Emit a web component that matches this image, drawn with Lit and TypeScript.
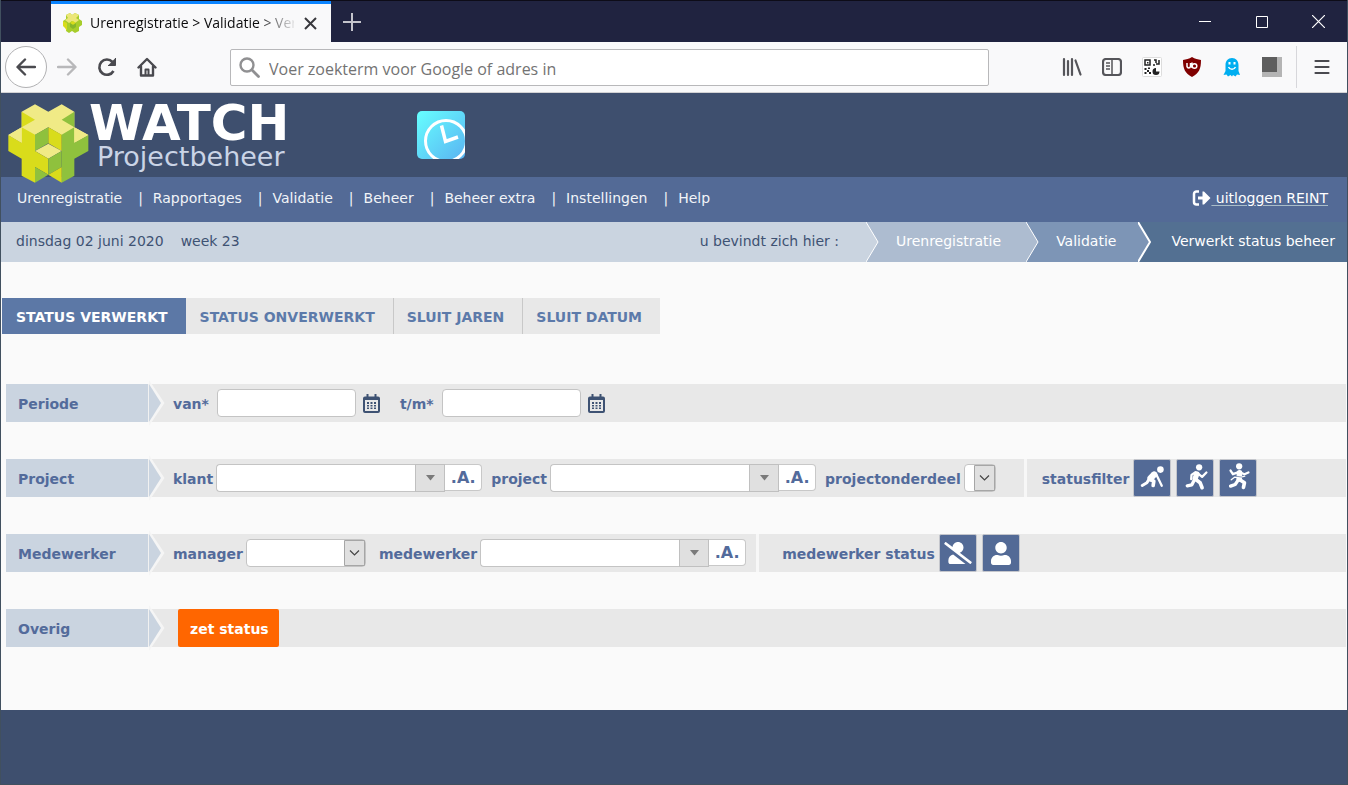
import { LitElement, html, css, svg, nothing, TemplateResult } from "lit";
import { customElement, property } from "lit/decorators.js";

/* ---------- Browser window: title bar and toolbar ---------- */

@customElement("browser-chrome")
export class BrowserChrome extends LitElement {
  static styles = css`
    :host { display: block; font-family: "Open Sans", "Noto Sans", sans-serif; }
    button { border: 0; background: none; padding: 0; margin: 0; display: grid; place-items: center; }
    svg { display: block; fill: none; }
    .titlebar { display: flex; height: 41px; border-top: 1px solid #0d0c18; background: #202340; }
    .tab { display: flex; align-items: center; box-sizing: border-box; width: 280px; height: 41px; margin-left: 50px; padding: 0 14px 0 10px; border-top: 3px solid #0a84ff; background: #f9f9fa; }
    .title { flex: 1; margin: 0 10px 0 7px; overflow: hidden; white-space: nowrap; font-size: 14px; line-height: 20px; color: #0c0c0d; mask-image: linear-gradient(to right, #000 82%, transparent 102%); }
    .add { width: 42px; }
    .controls { display: flex; margin-left: auto; }
    .controls button { width: 57px; }
    .toolbar { display: flex; align-items: center; height: 50px; padding-left: 4px; background: #f9f9fa; border-bottom: 1px solid #d2d2d4; }
    .nav { width: 40px; height: 40px; }
    .back { box-sizing: border-box; width: 42px; height: 42px; border: 1px solid #b1b1b3; border-radius: 50%; background: #fff; }
    .address { flex: 1; display: flex; align-items: center; box-sizing: border-box; height: 37px; margin: 0 63px; padding-left: 8px; border: 1px solid #b8b8ba; border-radius: 2px; background: #fff; }
    .address input { flex: 1; min-width: 0; border: 0; outline: 0; padding: 3px 0 0 9px; background: none; font: 16px "Open Sans", "Noto Sans", sans-serif; }
    .address input::placeholder { color: #737373; opacity: 1; }
    .menu { width: 51px; height: 42px; margin-left: 4px; border-left: 1px solid #d7d7db; }
  `;

  render() {
    return html`
      <div class="titlebar">
        <div class="tab">
          <svg width="22" height="22" viewBox="0 0 22 22">
            <path d="M5 3l4-2 2 2 3-2 4 2v4l3 2v4l-3 2v4l-4 2-3-2-3 2-3-2v-4l-3-2V9l3-2z" fill="#a7cd2b"/>
            <path d="M5 3l4-2 2 2 3-2 4 2-3 3 3 2-4 3-3-2-3 2-4-3 3-2z" fill="#ece678"/>
            <path d="M2 9l4 2v8l-2-3-2-2zM9 11l3-2 3 2-3 2z" fill="#d8dc1c"/>
            <path d="M12 13l3-2v4l-3 2-3-2v-4z" fill="#86b62b"/>
          </svg>
          <span class="title">Urenregistratie &gt; Validatie &gt; Verwerkt status beheer</span>
          <button aria-label="Tabblad sluiten">
            <svg width="13" height="13" viewBox="0 0 13 13" stroke="#38383d" stroke-width="2"><path d="M1 1l11 11M12 1L1 12"/></svg>
          </button>
        </div>
        <button class="add" aria-label="Nieuw tabblad">
          <svg width="18" height="18" viewBox="0 0 18 18" stroke="#c4c4cc" stroke-width="2"><path d="M0 9h18M9 0v18"/></svg>
        </button>
        <div class="controls">
          <button aria-label="Minimaliseren"><svg width="12" height="12" stroke="#fff"><path d="M0 5.500h12"/></svg></button>
          <button aria-label="Maximaliseren"><svg width="12" height="12" stroke="#fff"><path d="M.5.5h11v11H.5z"/></svg></button>
          <button aria-label="Sluiten"><svg width="13" height="13" stroke="#fff" stroke-width="1.200"><path d="M0 0l13 13M13 0L0 13"/></svg></button>
        </div>
      </div>
      <div class="toolbar">
        <button class="back" aria-label="Vorige">
          <svg width="20" height="18" viewBox="0 0 20 18" stroke="#4a4a4f" stroke-width="2.400" stroke-linecap="round" stroke-linejoin="round"><path d="M19 9H2M9 1.500L1.500 9 9 16.500"/></svg>
        </button>
        <button class="nav" aria-label="Volgende">
          <svg width="20" height="18" viewBox="0 0 20 18" stroke="#b8b8ba" stroke-width="2.400" stroke-linecap="round" stroke-linejoin="round"><path d="M1 9h17M11 1.500L18.500 9 11 16.500"/></svg>
        </button>
        <button class="nav" aria-label="Vernieuwen">
          <svg width="20" height="20" viewBox="0 0 20 20" stroke="#4a4a4f" stroke-width="2.600"><path d="M16.500 14A7.600 7.600 0 1 1 15.500 5"/><path d="M18.500 1v7.500H11" fill="#4a4a4f" stroke-width="1"/></svg>
        </button>
        <button class="nav" aria-label="Startpagina">
          <svg width="20" height="20" viewBox="0 0 20 20" stroke="#4a4a4f" stroke-width="2.400" stroke-linejoin="round" stroke-linecap="round"><path d="M1.500 10.500L10 2l8.500 8.500M4 9.500V18.500h12V9.500"/><path d="M8.500 18v-5.500h3V18" stroke-width="2"/></svg>
        </button>
        <div class="address">
          <svg width="21" height="21" viewBox="0 0 21 21" stroke="#909092" stroke-linecap="round"><circle cx="8" cy="8" r="6.500" stroke-width="2.400"/><path d="M13 13l6.500 6.500" stroke-width="2.800"/></svg>
          <input type="text" aria-label="Adresbalk" placeholder="Voer zoekterm voor Google of adres in" />
        </div>
        <button class="nav" aria-label="Bibliotheek">
          <svg width="20" height="20" viewBox="0 0 20 20" stroke="#55555a" stroke-width="2.200" stroke-linecap="round"><path d="M2 2v16M6 4v14M10 2v16M13.500 3.500L18.500 17.500"/></svg>
        </button>
        <button class="nav" aria-label="Zijbalk">
          <svg width="20" height="18" viewBox="0 0 20 18" stroke="#55555a" stroke-width="2.200"><rect x="1" y="1" width="18" height="16" rx="3"/><path d="M10 1v16M4 5h4M4 8h4M4 11h4" stroke-width="1.500"/></svg>
        </button>
        <button class="nav" aria-label="QR-code">
          <svg width="20" height="20" viewBox="0 0 20 20"><rect x=".5" y=".5" width="19" height="19" rx="1" fill="#fff" stroke="#ddd"/><path d="M3 3h5v5H3zM12 3h2v3M17 3v4h-3M11 8h2" stroke="#222" stroke-width="1.500"/><path d="M5 5h1.500v1.500H5zM2.500 11h2v2h-2zM6 10.500h2v1.500H6zM5 13h2v2H5zM2.500 15h2v2h-2zM7 15h2v2H7z" fill="#222"/><path d="M14 11a3.500 3.500 0 1 0 3.500 3.500H14z" fill="#222"/></svg>
        </button>
        <button class="nav" aria-label="uBlock Origin">
          <svg width="20" height="20" viewBox="0 0 20 20"><path d="M10 0c3 2 6 2 9 3 0 9-2 13-9 17C3 16 1 12 1 3c3-1 6-1 9-3z" fill="#800000"/><path d="M5 6v3.500a1.800 1.800 0 0 0 3.500 0V6M10 5.500v5.500" stroke="#fff" stroke-width="1.500"/><circle cx="12.500" cy="9" r="2.300" stroke="#fff" stroke-width="1.500"/></svg>
        </button>
        <button class="nav" aria-label="Ghostery">
          <svg width="18" height="20" viewBox="0 0 18 20"><path d="M9 1c4 0 6.500 3 6.500 7v6l1.500 4-3-.5-1.500 2-2.500-1.500L9 19.500 7.500 18 5 19.500l-1.500-2-3 .5L2.500 14V8C2.500 4 5 1 9 1z" fill="#00aef0"/><path d="M6.500 5v2.500M11.500 5v2.500" stroke="#fff" stroke-width="2"/><path d="M5.500 10c1.500 3 5.500 3 7 0" stroke="#fff" stroke-width="1.500"/></svg>
        </button>
        <button class="nav" aria-label="Extensie">
          <svg width="20" height="20"><path d="M0 0h20v20H0z" fill="#b4b4b4"/><path d="M0 0h15v15H0z" fill="#5e5e5e"/></svg>
        </button>
        <button class="menu" aria-label="Menu">
          <svg width="16" height="16" viewBox="0 0 16 16" stroke="#4a4a4f" stroke-width="2.200" stroke-linecap="round"><path d="M1.500 2h13M1.500 8h13M1.500 14h13"/></svg>
        </button>
      </div>
    `;
  }
}

/* ---------- Filter row: arrow-shaped heading with fields ---------- */

@customElement("filter-row")
export class FilterRow extends LitElement {
  @property() heading = "";

  static styles = css`
    :host { display: flex; height: 38px; background: #e8e8e8; }
    .heading { box-sizing: border-box; width: 143px; padding-left: 12px; margin: 0; border-right: 1px solid #f1f1f1; background: #cad4e0; color: #536b9b; font-size: 14px; font-weight: 700; line-height: 40px; }
    .arrow { display: block; width: 15px; height: 38px; overflow: visible; }
    .fields { display: flex; flex: 1; align-items: center; padding-left: 9px; }
  `;

  render() {
    return html`
      <h2 class="heading">${this.heading}</h2>
      <svg class="arrow" viewBox="0 0 15 38">
        <path d="M0-4L15.500 19 0 42z" fill="#f5f5f5"/>
        <path d="M0 0L12 19 0 38z" fill="#cad4e0"/>
      </svg>
      <div class="fields"><slot></slot></div>
    `;
  }
}

/* ---------- Application ---------- */

const figure = (shape: TemplateResult) => svg`<g fill="none" stroke="#fff" stroke-linecap="round" stroke-linejoin="round">${shape}</g>`;

@customElement("app-root")
export class AppRoot extends LitElement {
  static styles = css`
    :host { display: flex; flex-direction: column; box-sizing: border-box; min-height: 100vh; border: solid #41505f; border-width: 0 1px 1px; background: #fafafa; font-family: Verdana, "DejaVu Sans", sans-serif; font-size: 14px; }
    a { color: inherit; text-decoration: none; }
    svg { display: block; }

    .header { display: flex; align-items: flex-start; position: relative; z-index: 1; box-sizing: border-box; height: 84px; padding: 11px 0 0 7px; background: #3e4f6e; }
    .brand { display: grid; color: #fff; white-space: nowrap; }
    .name { font-size: 50px; font-weight: 700; line-height: 38px; }
    .sub { margin-left: 8px; font-size: 27px; line-height: 30px; color: #cad4e6; }
    .clock { margin: 7px 0 0 128px; }

    .navbar { display: flex; align-items: center; height: 45px; box-sizing: border-box; padding: 0 19px 3px 16px; background: #536a96; color: #f1f4f8; line-height: 20px; white-space: nowrap; }
    .navlist { display: flex; flex: 1; margin: 0; padding: 0; list-style: none; }
    .navlist li + li::before { content: "|"; margin: 0 10px 0 16px; }
    .logout { display: flex; align-items: center; color: #fff; }
    .logout span { text-decoration: underline; white-space: pre; text-decoration-color: #a9bdc9; text-underline-offset: 2px; }

    .crumbbar { display: flex; align-items: stretch; height: 40px; background: #cad4e0; color: #3e5273; line-height: 38px; white-space: nowrap; }
    .date { flex: 1; padding-left: 15px; }
    .date span { margin-left: 17px; }
    .here { padding-right: 27px; }
    .crumb { display: flex; gap: 17px; padding-right: 25px; color: #fff; }
    .crumb.one { background: #adbcd0; }
    .crumb.two { padding-right: 22px; background: #7d95b6; }
    .crumb.three { gap: 20px; padding-right: 12px; background: #537092; }

    .main { padding: 36px 1px 63px; }
    .tabs { display: flex; }
    .tabs button { height: 36px; padding: 2px 18px 0 13px; border: 0; border-left: 1px solid #c8c8c8; background: #e8e8e8; color: #5c7aaa; font: 700 14px Verdana, "DejaVu Sans", sans-serif; white-space: nowrap; }
    .tabs .active, .tabs .active + button { border-left-color: transparent; }
    .tabs .active { background: #5c78a6 border-box; color: #fff; }
    .form { display: grid; gap: 37px; margin: 50px 0 0 4px; }

    label, .caption { margin-right: 3px; padding-top: 2px; color: #536b9b; font-weight: 700; white-space: nowrap; }
    .caption { margin-right: 4px; }
    input, select { box-sizing: border-box; height: 28px; margin: 0; padding: 0 4px; border: 1px solid #c4c4c4; border-radius: 4px; background: #fff; outline: 0; appearance: none; font: 14px Verdana, "DejaVu Sans", sans-serif; }
    .period { margin-right: 8px; }
    .date-input { width: 139px; }
    .calendar { margin: 0 20px 0 7px; padding: 0; border: 0; background: none; }
    .combo { display: flex; align-items: flex-start; margin-right: 9px; }
    .combo input { width: 199px; border-right: 0; border-radius: 4px 0 0 4px; }
    .combo button { box-sizing: border-box; height: 28px; padding: 0; }
    .open { display: grid; place-items: center; width: 30px; border: 1px solid #c0c0c0; background: #e0e0e0; }
    .combo .all { width: 37px; height: 27px; border: 1px solid #c8c8c8; border-left: 0; border-radius: 0 4px 4px 0; background: #fff; color: #536b9b; font: 700 16px/22px Verdana, "DejaVu Sans", sans-serif; }
    .choice { display: grid; }
    .choice > * { grid-area: 1 / 1; }
    .choice svg { justify-self: end; pointer-events: none; }
    .choice select { width: 32px; }
    .choice.wide { margin-right: 13px; }
    .choice.wide select { width: 120px; }
    .divider { align-self: stretch; width: 3px; margin: 0 23px 0 1px; background: #f7f7f7; }
    .divider.far { margin: 0 15px 0 28px; }
    .iconbutton { box-sizing: border-box; width: 38px; height: 38px; margin-right: 5px; padding: 0; border: 1px solid #c4c6cc; border-radius: 2px; background: #536a96; display: grid; place-items: center; }
    .submit { height: 38px; margin-left: 5px; padding: 2px 10px 0 12px; border: 0; border-radius: 2px; background: #ff6600; color: #fff; font: 700 14px Verdana, "DejaVu Sans", sans-serif; }

    .footer { flex: 1; min-height: 74px; background: #3e4f6e; }
  `;

  private menu = ["Urenregistratie", "Rapportages", "Validatie", "Beheer", "Beheer extra", "Instellingen", "Help"];
  private tabs = ["STATUS VERWERKT", "STATUS ONVERWERKT", "SLUIT JAREN", "SLUIT DATUM"];

  private dateField(id: string, text: string) {
    return html`
      <label class="period" for=${id}>${text}</label>
      <input class="date-input" id=${id} type="text" />
      <button class="calendar" type="button" aria-label="Kalender ${text}">
        <svg width="17" height="19" viewBox="0 0 17 19" fill="#3e5273">
          <path fill-rule="evenodd" d="M3.500 0h2v2.500h6V0h2v2.500H15a2 2 0 0 1 2 2V17a2 2 0 0 1-2 2H2a2 2 0 0 1-2-2V4.500a2 2 0 0 1 2-2h1.500zM2 6v11h13V6z"/>
          <path d="M4 8h2v2H4zM7.500 8h2v2h-2zM11 8h2v2h-2zM4 11h2v1.500H4zM7.500 11h2v1.500h-2zM11 11h2v1.500h-2zM4 13.500h2V15H4zM7.500 13.500h2V15h-2zM11 13.500h2V15h-2z"/>
        </svg>
      </button>`;
  }

  private combo(id: string, text: string) {
    return html`
      <label for=${id}>${text}</label>
      <div class="combo">
        <input id=${id} type="text" role="combobox" aria-expanded="false" />
        <button class="open" type="button" aria-label="Open ${text}">
          <svg width="9" height="6"><path d="M0 0h9L4.500 5.500z" fill="#7a7a7a"/></svg>
        </button>
        <button class="all" type="button">.A.</button>
      </div>`;
  }

  private choice(id: string, text: string, wide = false) {
    return html`
      <label for=${id}>${text}</label>
      <div class="choice ${wide ? "wide" : ""}">
        <select id=${id}><option></option></select>
        <svg width="22" height="28" viewBox="0 0 22 28" fill="none">
          <path d="M.5 1.500H20.500V26.500H.5z" fill="#e0e0e0" stroke="#a6a6a6"/>
          <path d="M6 11.500l4.500 4.500 4.500-4.500" stroke="#444" stroke-width="1.200"/>
        </svg>
      </div>`;
  }

  private chevron(fill: string, strong = false) {
    return html`<svg width="13" height="40" viewBox="0 0 13 40">
      <path d="M0 0L12 20 0 40z" fill=${fill}/>
      <path d="M0 0L12 20 0 40" fill="none" stroke="#fff" stroke-width=${strong ? 2 : 1}/>
    </svg>`;
  }

  render() {
    return html`
      <browser-chrome></browser-chrome>
      <header class="header">
        <svg width="81" height="80" viewBox="23 41 243 240">
          <path fill="#f0ea86" d="M64 64l40-22 40 22 40-22 38 22v47l42 23-42 24-38-24-40-23-40 23-40 24-40-24 40-23z"/>
          <path fill="#d9dc1b" d="M64 64l40 24-40 23zM24 134l40 23v-46l40 22v144l-40-21v-51l-40-23z"/>
          <path fill="#8fc13d" d="M222 64l-38 24 38 23zM184 133l38-22v46l42-23v48l-42 23v51l-38 21z"/>
          <path fill="#f0ea86" d="M64 111v46l-40-23zM222 111v46l42-23z"/>
          <path fill="#8fc13d" d="M104 133l40-22v48l-40 23z"/>
          <path fill="#d9dc1b" d="M144 111l40 22v49l-40-23z"/>
          <path fill="#f0ea86" d="M104 182l40-22 40 22-40 23z"/>
          <path fill="#d9dc1b" d="M104 182l40 23v48l-40-23z"/>
          <path fill="#8fc13d" d="M184 182l-40 23v48l40-23zM104 230l40 23-40 24z"/>
          <path fill="#d9dc1b" d="M184 230l-40 23 40 24z"/>
        </svg>
        <div class="brand"><span class="name">WATCH</span><span class="sub">Projectbeheer</span></div>
        <svg class="clock" width="48" height="48" viewBox="0 0 48 48">
          <defs>
            <linearGradient id="sky" x1="0" y1="0" x2="1" y2="1"><stop offset="0" stop-color="#6ff"/><stop offset="1" stop-color="#5ab4f2"/></linearGradient>
            <clipPath id="tile"><rect width="48" height="48" rx="5"/></clipPath>
          </defs>
          <g clip-path="url(#tile)" fill="none" stroke="#fff">
            <rect width="48" height="48" fill="url(#sky)" stroke="none"/>
            <circle cx="29" cy="30" r="20.500" stroke-width="3"/>
            <path d="M24.500 14.500l4 16L41 26" stroke-width="3.500"/>
          </g>
        </svg>
      </header>

      <nav class="navbar">
        <ul class="navlist">${this.menu.map((m) => html`<li><a href="#">${m}</a></li>`)}</ul>
        <a class="logout" href="#">
          <svg width="19" height="16" viewBox="0 0 18 16" fill="none"><path d="M6.500 1.500H4a2.500 2.500 0 0 0-2.500 2.500v8A2.500 2.500 0 0 0 4 14.500h2.500" stroke="#fff" stroke-width="2.500"/><path d="M5.500 6.500H10V1.500h1.500L18 8l-6.500 6.500H10v-5H5.500z" fill="#fff"/></svg>
          <span> uitloggen REINT</span>
        </a>
      </nav>

      <div class="crumbbar">
        <div class="date">dinsdag 02 juni 2020<span>week 23</span></div>
        <div class="here">u bevindt zich hier :</div>
        <a class="crumb one" href="#">${this.chevron("#cad4e0")}Urenregistratie</a>
        <a class="crumb two" href="#">${this.chevron("#adbcd0")}Validatie</a>
        <a class="crumb three" href="#">${this.chevron("#7d95b6", true)}Verwerkt status beheer</a>
      </div>

      <main class="main">
        <div class="tabs">
          ${this.tabs.map((t, i) => html`<button type="button" class=${i === 0 ? "active" : nothing}>${t}</button>`)}
        </div>
        <form class="form">
          <filter-row heading="Periode">${this.dateField("van", "van*")}${this.dateField("tm", "t/m*")}</filter-row>
          <filter-row heading="Project">
            ${this.combo("klant", "klant")}${this.combo("project", "project")}${this.choice("onderdeel", "projectonderdeel")}
            <span class="divider far"></span>
            <span class="caption">statusfilter</span>
            <button class="iconbutton" type="button" aria-label="Nog niet gestart">
              <svg width="36" height="36" viewBox="46 31 109 109">
                <circle cx="126" cy="60" r="10" fill="#fff"/>
                ${figure(svg`<path d="M107 75L96 86" stroke-width="19"/><path d="M114 76L130 109" stroke-width="7"/><path d="M97 91l9 4-2 13" stroke-width="11"/><path d="M90 92l-5 8-14 8" stroke-width="9"/>`)}
              </svg>
            </button>
            <button class="iconbutton" type="button" aria-label="Lopend">
              <svg width="36" height="36" viewBox="174 31 109 109">
                <circle cx="241" cy="53" r="9.500" fill="#fff"/>
                ${figure(svg`<path d="M234 73L229 87" stroke-width="16"/><path d="M238 72l12 10 13-13M230 68l-12 8-1 13" stroke-width="7"/><path d="M231 90l13 10 6 15" stroke-width="11"/><path d="M226 92l-7 14-14 3" stroke-width="10"/>`)}
              </svg>
            </button>
            <button class="iconbutton" type="button" aria-label="Afgerond">
              <svg width="36" height="36" viewBox="302 31 109 109">
                <circle cx="360" cy="50" r="9.500" fill="#fff"/>
                ${figure(svg`<path d="M361 70L360 88" stroke-width="17"/><path d="M364 69l12 5 12-5M354 69l-13 5-7-11" stroke-width="7"/><path d="M362 91l14 9-3 14" stroke-width="11"/><path d="M357 92l-9 13-14 5" stroke-width="10"/><path d="M336 91l10-8 15 1 16-4" stroke-width="4"/>`)}
                <path d="M350 80l20 3" stroke="#536a96" stroke-width="2"/>
              </svg>
            </button>
          </filter-row>
          <filter-row heading="Medewerker">
            ${this.choice("manager", "manager", true)}${this.combo("medewerker", "medewerker")}
            <span class="divider"></span>
            <span class="caption">medewerker status</span>
            <button class="iconbutton" type="button" aria-label="Niet actief">
              <svg width="28" height="22" viewBox="0 0 640 512" fill="#fff"><path d="M634 458L362 248C412 231 448 184 448 128 448 57 391 0 320 0c-67 0-121 52-127 117L45 3C38-2 28-1 23 6L3 31c-5 7-4 17 3 23l589 455c7 5 17 4 22-3l20-25c5-7 4-17-3-23zM96 422v42c0 26 22 48 48 48h350L207 290C144 301 96 356 96 422z"/></svg>
            </button>
            <button class="iconbutton" type="button" aria-label="Actief">
              <svg width="20" height="23" viewBox="0 0 448 512" fill="#fff"><path d="M224 256c71 0 128-57 128-128S295 0 224 0 96 57 96 128s57 128 128 128zm90 32h-17c-22 10-47 16-73 16s-51-6-73-16h-17C60 288 0 348 0 422v42c0 26 22 48 48 48h352c26 0 48-22 48-48v-42c0-74-60-134-134-134z"/></svg>
            </button>
          </filter-row>
          <filter-row heading="Overig"><button class="submit" type="button">zet status</button></filter-row>
        </form>
      </main>
      <footer class="footer"></footer>
    `;
  }
}
